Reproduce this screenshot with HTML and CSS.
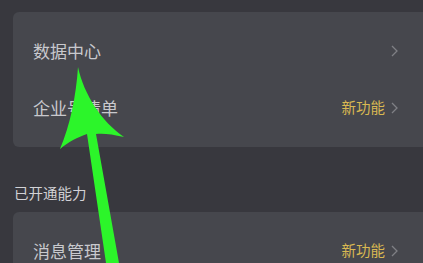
FILE: index.html
```html
<!DOCTYPE html>
<html lang="zh">
<head>
<meta charset="utf-8">
<link rel="stylesheet" href="styles.css">
</head>
<body>
<div class="page">
  <div class="card first">
    <div class="row">
      <span class="label">数据中心</span>
      <span class="right"><svg class="chev" width="7" height="12" viewBox="0 0 7 12"><polyline points="1,1 6,6 1,11" fill="none" stroke="#7f8085" stroke-width="1.3"/></svg></span>
    </div>
    <div class="row">
      <span class="label">企业号清单</span>
      <span class="right"><span class="tag">新功能</span><svg class="chev" width="7" height="12" viewBox="0 0 7 12"><polyline points="1,1 6,6 1,11" fill="none" stroke="#7f8085" stroke-width="1.3"/></svg></span>
    </div>
  </div>
  <div class="section">已开通能力</div>
  <div class="card">
    <div class="row">
      <span class="label">消息管理</span>
      <span class="right"><span class="tag">新功能</span><svg class="chev" width="7" height="12" viewBox="0 0 7 12"><polyline points="1,1 6,6 1,11" fill="none" stroke="#7f8085" stroke-width="1.3"/></svg></span>
    </div>
  </div>
</div>
<svg class="arrow" width="423" height="263" viewBox="0 0 423 263">
  <path d="M78 67 C84 95 102 122 124 137 C112 134 102 133 96 134 L119 263 L106 263 L87 134 C78 137 68 142 60 149 C70 125 76 97 78 67 Z" fill="#2cf52a"/>
</svg>
</body>
</html>
```
FILE: styles.css
```css
html, body {
  margin: 0;
  padding: 0;
  background: #38383e;
  width: 423px;
  height: 263px;
  overflow: hidden;
}
body {
  position: relative;
  font-family: "Noto Sans CJK SC", "Noto Sans", sans-serif;
}
.page {
  padding: 12px 0 0 13px;
  display: flex;
  flex-direction: column;
}
.card {
  background: #46474d;
  border-radius: 6px 0 0 6px;
  margin-right: -10px;
  padding: 10px 35px 11px 20px;
}
.row {
  height: 57px;
  display: flex;
  align-items: center;
  justify-content: space-between;
}
.label {
  color: #c9c9cd;
  font-size: 17px;
  line-height: 1;
}
.right {
  display: flex;
  align-items: center;
  gap: 6px;
}
.tag {
  color: #d9b952;
  font-size: 14.5px;
  line-height: 1;
}
.chev {
  display: block;
}
.section {
  color: #d2d2d6;
  font-size: 14.5px;
  line-height: 1;
  padding: 39px 0 0 1px;
  height: 26px;
}
.arrow {
  position: absolute;
  left: 0;
  top: 0;
}
```
